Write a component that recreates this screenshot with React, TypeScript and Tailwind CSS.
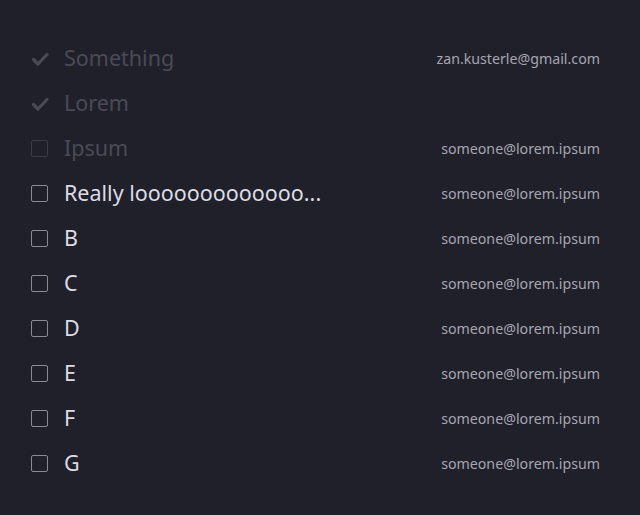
import React from "react";

type Row = { label: string; email?: string; checked?: boolean; disabled?: boolean };

const rows: Row[] = [
  { label: "Something", email: "zan.kusterle@gmail.com", checked: true, disabled: true },
  { label: "Lorem", checked: true, disabled: true },
  { label: "Ipsum", email: "someone@lorem.ipsum", disabled: true },
  { label: "Really looooooooooooo...", email: "someone@lorem.ipsum" },
  { label: "B", email: "someone@lorem.ipsum" },
  { label: "C", email: "someone@lorem.ipsum" },
  { label: "D", email: "someone@lorem.ipsum" },
  { label: "E", email: "someone@lorem.ipsum" },
  { label: "F", email: "someone@lorem.ipsum" },
  { label: "G", email: "someone@lorem.ipsum" },
];

function Check({ checked, disabled }: { checked?: boolean; disabled?: boolean }) {
  if (checked) {
    return (
      <svg width="18" height="18" viewBox="0 0 18 18" className="block">
        <path d="M2.5 9.5 L7 14 L16 4.5" fill="none" stroke="#4a4a57" strokeWidth="3.2" strokeLinecap="round" strokeLinejoin="round" />
      </svg>
    );
  }
  return (
    <div
      className={`w-[17px] h-[17px] rounded-[2px] border ${disabled ? "border-[#3c3c48]" : "border-[#8a8a94]"}`}
    />
  );
}

export default function App() {
  return (
    <div
      className="w-[640px] h-[515px] bg-[#20202b] pt-[36px] pl-[31px] pr-[40px]"
      style={{ fontFamily: '"Noto Sans", sans-serif' }}
    >
      {rows.map((r, i) => (
        <div key={i} className="h-[45px] flex items-center">
          <div className="w-[33px] flex items-center">
            <Check checked={r.checked} disabled={r.disabled} />
          </div>
          <div className={`flex-1 text-[21.5px] ${r.disabled ? "text-[#4a4a57]" : "text-[#dcdce4]"}`}>{r.label}</div>
          {r.email && <div className="text-[14.2px] text-[#a6a6b0]">{r.email}</div>}
        </div>
      ))}
    </div>
  );
}
